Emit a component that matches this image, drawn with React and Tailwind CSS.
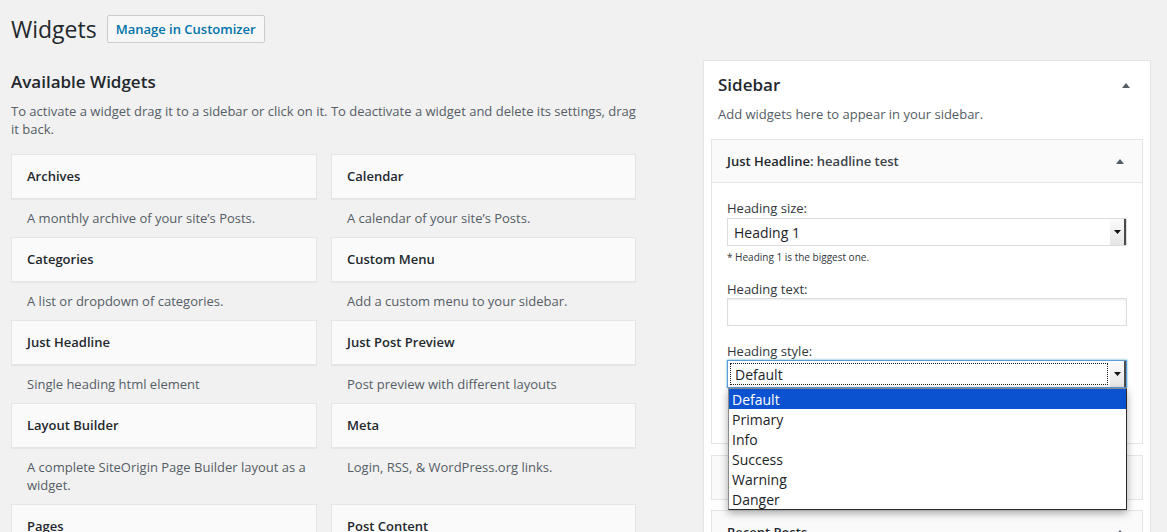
const widgets = [
  { title: 'Archives', desc: 'A monthly archive of your site’s Posts.' },
  { title: 'Calendar', desc: 'A calendar of your site’s Posts.' },
  { title: 'Categories', desc: 'A list or dropdown of categories.' },
  { title: 'Custom Menu', desc: 'Add a custom menu to your sidebar.' },
  { title: 'Just Headline', desc: 'Single heading html element' },
  { title: 'Just Post Preview', desc: 'Post preview with different layouts' },
  { title: 'Layout Builder', desc: 'A complete SiteOrigin Page Builder layout as a widget.' },
  { title: 'Meta', desc: 'Login, RSS, & WordPress.org links.' },
  { title: 'Pages', desc: 'A list of your site’s Pages.' },
  { title: 'Post Content', desc: 'Displays content from the current post.' },
];

const styleOptions = ['Default', 'Primary', 'Info', 'Success', 'Warning', 'Danger'];

const ArrowUp = () => (
  <svg width="8" height="5" viewBox="0 0 8 5" className="block">
    <polygon points="0,5 4,0 8,5" fill="#555d66" />
  </svg>
);

// mac-style native select button
const SelectArrow = () => (
  <div className="flex items-center justify-center w-[16px] h-full bg-gradient-to-b from-[#fbfbfb] to-[#e6e6e6] border-r-2 border-[#4a4a4a]">
    <svg width="7" height="4" viewBox="0 0 7 4" className="block">
      <polygon points="0,0 7,0 3.5,4" fill="#111" />
    </svg>
  </div>
);

const WidgetCard = ({ widget }) => (
  <div>
    <div className="h-[45px] flex items-center px-[15px] pt-[1px] bg-[#fafafa] border border-[#e5e5e5] shadow-[0_1px_1px_rgba(0,0,0,0.04)]">
      <h3 className="text-[13px] font-semibold text-[#23282d]">{widget.title}</h3>
    </div>
    <p className="pt-[10px] pb-[10px] pl-[16px] pr-[2px] text-[13px] leading-[18px] text-[#555d66]">
      {widget.desc}
    </p>
  </div>
);

export default function App() {
  return (
    <div className="w-full h-[532px] overflow-hidden bg-[#f1f1f1] pl-[11px] font-['Open_Sans',sans-serif] text-[#23282d]">
      {/* Titre de page */}
      <div className="flex items-center pt-[15px]">
        <h1 className="text-[23px] leading-[28px] font-normal">Widgets</h1>
        <button className="ml-[10px] h-[28px] px-[8px] pt-[1px] border border-[#cccccc] rounded-[2px] bg-[#f7f7f7] text-[13px] font-semibold text-[#0073aa]">
          Manage in Customizer
        </button>
      </div>

      <div className="flex items-start">
        {/* Widgets disponibles */}
        <div className="w-[625px] shrink-0">
          <h2 className="mt-[27px] text-[17px] leading-[24px] font-semibold">Available Widgets</h2>
          <p className="mt-[8px] text-[13px] leading-[18px] text-[#555d66]">
            To activate a widget drag it to a sidebar or click on it. To deactivate a widget and delete its settings, drag it back.
          </p>
          <div className="mt-[16px] grid grid-cols-[306px_305px] gap-x-[14px]">
            {widgets.map((w) => (
              <WidgetCard key={w.title} widget={w} />
            ))}
          </div>
        </div>

        {/* Sidebar */}
        <div className="ml-[67px] mt-[17px] w-[448px] shrink-0 bg-white border border-[#e5e5e5] shadow-[0_1px_1px_rgba(0,0,0,0.04)]">
          <div className="flex items-center justify-between pl-[14px] pr-[20px] pt-[12px]">
            <h2 className="text-[17px] leading-[24px] font-semibold">Sidebar</h2>
            <ArrowUp />
          </div>
          <p className="mt-[8px] pl-[14px] text-[13px] leading-[18px] text-[#555d66]">
            Add widgets here to appear in your sidebar.
          </p>

          <div className="mt-[16px] px-[7px]">
            {/* Widget ouvert */}
            <div className="mb-[11px] border border-[#e5e5e5]">
              <div className="h-[43px] flex items-center justify-between pl-[15px] pr-[18px] pt-[1px] bg-[#fafafa] border-b border-[#e5e5e5]">
                <h3 className="text-[13px] font-semibold">
                  Just Headline<span className="text-[#3c434a]">: headline test</span>
                </h3>
                <ArrowUp />
              </div>
              <div className="bg-white px-[15px] pt-[16px] pb-[55px]">
                <label className="block text-[13px] leading-[18px] text-[#32373c]">Heading size:</label>
                <div className="mt-[1px] h-[28px] flex items-stretch border border-[#dddddd] bg-white">
                  <span className="flex-1 flex items-center pl-[6px] text-[14px] text-[#1d2327]">Heading 1</span>
                  <SelectArrow />
                </div>
                <p className="mt-[4px] text-[10px] leading-[14px] text-[#32373c]">* Heading 1 is the biggest one.</p>

                <label className="mt-[16px] block text-[13px] leading-[18px] text-[#32373c]">Heading text:</label>
                <div className="h-[28px] border border-[#dddddd] bg-white shadow-[inset_0_1px_2px_rgba(0,0,0,0.07)]" />

                <label className="mt-[16px] block text-[13px] leading-[18px] text-[#32373c]">Heading style:</label>
                <div className="relative">
                  <div className="h-[28px] flex items-stretch border border-[#5b9dd9] bg-white shadow-[0_0_2px_rgba(30,140,190,0.8)]">
                    <span className="flex-1 m-[2px] flex items-center pl-[4px] border border-dotted border-[#222] text-[14px] text-[#1d2327]">
                      Default
                    </span>
                    <SelectArrow />
                  </div>
                  <ul className="absolute top-full left-[1px] right-0 z-10 bg-white border border-[#2b2b2b] border-l-[#8a8a8a] border-t-[#8a8a8a] shadow-[0_3px_8px_rgba(0,0,0,0.35)]">
                    {styleOptions.map((o, i) => (
                      <li
                        key={o}
                        className={
                          i === 0
                            ? 'h-[20px] flex items-center pl-[3px] text-[14px] bg-[#0b52d1] text-white'
                            : 'h-[20px] flex items-center pl-[3px] text-[14px] text-[#1d2327]'
                        }
                      >
                        {o}
                      </li>
                    ))}
                  </ul>
                </div>
              </div>
            </div>

            <div className="mb-[10px] h-[45px] border border-[#e5e5e5] bg-[#fafafa]" />

            <div className="h-[45px] flex items-center justify-between pl-[15px] pr-[18px] border border-[#e5e5e5] bg-[#fafafa]">
              <h3 className="text-[13px] font-semibold">Recent Posts</h3>
              <ArrowUp />
            </div>
          </div>
        </div>
      </div>
    </div>
  );
}
